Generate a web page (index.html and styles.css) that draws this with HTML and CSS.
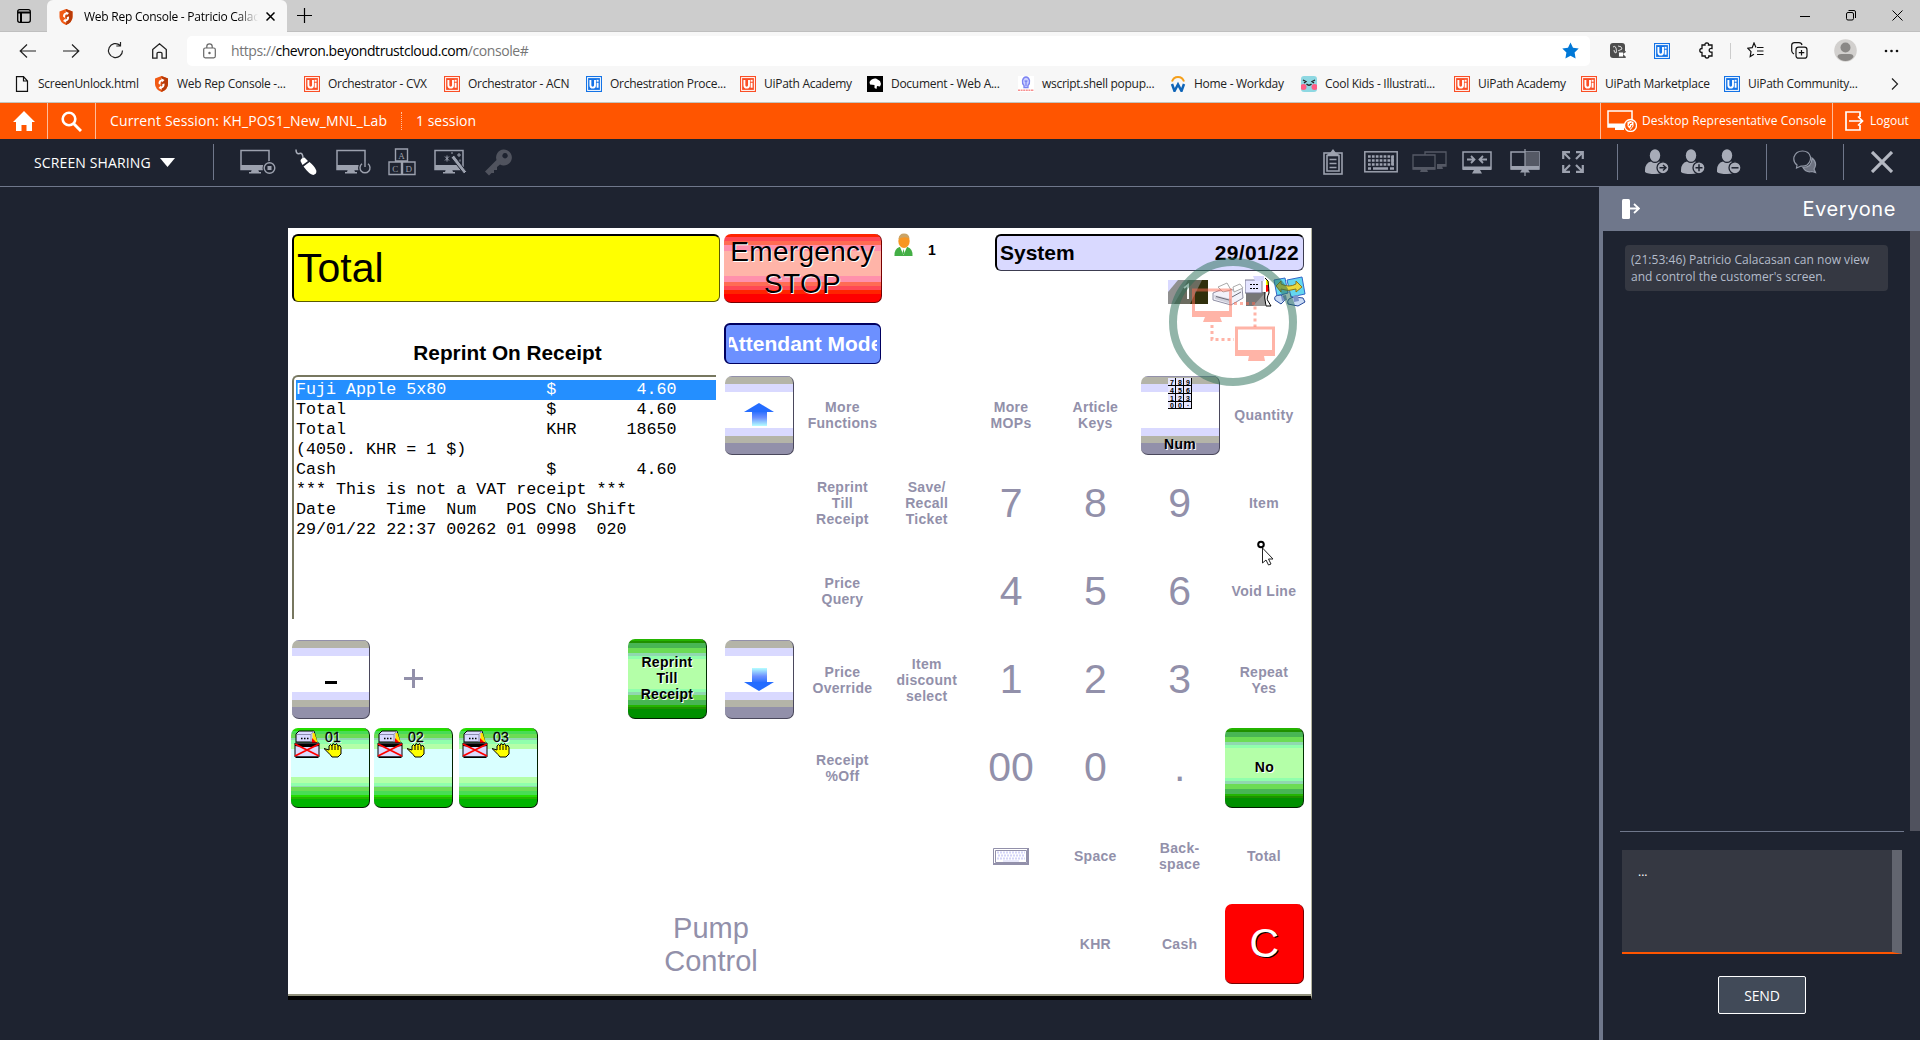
FILE: index.html
```html
<!DOCTYPE html>
<html lang="en">
<head>
<meta charset="utf-8">
<title>Web Rep Console</title>
<link rel="stylesheet" href="styles.css">
</head>
<body>
<svg class="defs" width="0" height="0">
  <symbol id="uipath" viewBox="0 0 16 16"><rect width="16" height="16" fill="currentColor"/><rect x="1.6" y="1.6" width="12.8" height="12.8" fill="none" stroke="#fff" stroke-width="1"/><path d="M4.4 4v5.2q0 2.4 2.3 2.4t2.3-2.4V4M11.6 6.8v5" fill="none" stroke="#fff" stroke-width="1.9"/><rect x="10.6" y="3.8" width="2" height="1.9" fill="#fff"/></symbol>
  <symbol id="shield" viewBox="0 0 14 16"><path d="M7 0 13.5 2.5V8Q13.500 13 7 16Q.5 13 .5 8V2.500z" fill="#f15a14"/><path d="M7 0 13.500 2.500V8Q13.500 13 7 16z" fill="#b93b08"/><path d="M4 7.500q0-3.500 3-4l-.5-1.200L10 4 7.700 6.500V5.200Q5.600 5.500 6 9zM10 7.500q.5 4-3 5l.4 1.300L4 12l2.600-2.700v1.500Q8.500 10 7.800 8z" fill="#fff"/></symbol>
  <symbol id="monitor" viewBox="0 0 36 26"><path d="M1 1.500h28v19H1z" fill="none" stroke="currentColor" stroke-width="1.500"/><path d="M1 16h28v4.500H1zM12 20h6l1 3h2v1.500H9V23h2z" fill="currentColor"/></symbol>
  <symbol id="person" viewBox="0 0 26 26"><ellipse cx="10" cy="6.500" rx="5.200" ry="6.300" fill="#a8acb8"/><path d="M0 21q0-7 6-8.500 4 3 8 0 6 1.500 6.500 8.500-3 4-10.500 4T0 23z" fill="#a8acb8"/><circle cx="18" cy="18.800" r="6" fill="#a8acb8" stroke="#1e2330" stroke-width="1.300"/></symbol>
  <symbol id="hand" viewBox="0 0 18 15"><path d="M0 5.500 5 7V3l1.500-1.500L8 3l1-2.500L11 2l1.500-1.500L14 3l2-.5 1 2v6.500l-3 3H8l-2-2.500z" fill="#ff0" stroke="#000"/><path d="M8 3v4M11 2.500V7M14 3v4" stroke="#000"/></symbol>
  <symbol id="pump-off" viewBox="0 0 26 28"><path d="M2 4 5 1h15l3 11H2z" fill="#dadaff" stroke="#000"/><path d="M3 4.500h14V12M17 4.500 20 1" fill="none" stroke="#8c8cb0"/><path d="M18.500 3h2l3 9h-5z" fill="#ffe000"/><path d="M18 8l5 5h-5z" fill="red"/><path d="M7 8.500h1.500M10 8.500h1.500M13 8.500h1.500" stroke="#000" stroke-width="1.300"/><path d="M1 13h24v14H1z" fill="#dadaff" stroke="#000"/><path d="M1 13.500h24v2.500l-7 1H8l-7-1z"/><path d="M1 14l24 12M25 14 1 26" stroke="red" stroke-width="1.900"/><path d="M2 27.300h22" stroke="#000" stroke-width="1.500"/></symbol>
</svg>

<header class="tabs">
  <div class="tab-menu"><svg width="16" height="16" viewBox="0 0 16 16" fill="none" stroke="#000" stroke-width="1.300"><rect x="1.700" y="1.700" width="12.600" height="12.600" rx="2"/><path d="M2 4.500h12M5 4.500V14" stroke-width="2"/></svg></div>
  <div class="tab"><svg width="14" height="16"><use href="#shield"/></svg><span>Web Rep Console - Patricio Calacasan</span><svg width="9" height="9" viewBox="0 0 9 9" stroke="#000" stroke-width="1.500"><path d="M.5.5l8 8M8.500.5l-8 8"/></svg></div>
  <svg class="new-tab" width="15" height="15" viewBox="0 0 15 15" stroke="#000" stroke-width="1.200"><path d="M7.500 0v15M0 7.500h15"/></svg>
  <div class="window-controls">
    <svg width="10" height="10" stroke="#000"><path d="M0 5.500h10"/></svg>
    <svg width="10" height="11" viewBox="0 0 10 11" fill="none" stroke="#000"><rect x=".5" y="2.500" width="7" height="7.500" rx="1.500"/><path d="M2.500.5H8q1.500 0 1.500 1.500v6"/></svg>
    <svg width="11" height="11" viewBox="0 0 11 11" stroke="#000"><path d="M.5.5l10 10M10.500.5l-10 10"/></svg>
  </div>
</header>

<nav class="address-row">
  <svg width="17" height="14" viewBox="0 0 17 14" fill="none" stroke="#222" stroke-width="1.200"><path d="M17 7H1.500M8 .5 1.200 7 8 13.500"/></svg>
  <svg width="17" height="14" viewBox="0 0 17 14" fill="none" stroke="#222" stroke-width="1.200"><path d="M0 7h15.500M9 .5 15.800 7 9 13.500"/></svg>
  <svg width="17" height="17" viewBox="0 0 17 17" fill="none" stroke="#222" stroke-width="1.200"><path d="M15.500 8.500A7 7 0 1 1 13 3.200M13.500 0v4H9.300"/></svg>
  <svg width="15" height="16" viewBox="0 0 15 16" fill="none" stroke="#222" stroke-width="1.300"><path d="M.7 6.500 7.500.8l6.800 5.700v8.700H10V10.500q0-1.200-1.200-1.200H6.200Q5 9.300 5 10.500v4.700H.7z"/></svg>
  <div class="url"><svg width="13" height="16" viewBox="0 0 13 16" fill="none" stroke="#666" stroke-width="1.200"><rect x=".7" y="5" width="11.600" height="9.800" rx="1.500"/><path d="M3.800 5V3.500a2.700 2.700 0 0 1 5.400 0V5"/><circle cx="6.500" cy="10" r=".6" fill="#666"/></svg><span><i>https://</i>chevron.beyondtrustcloud.com<i>/console#</i></span><svg class="fav" width="17" height="17" viewBox="0 0 17 17"><path d="M8.500.5 11 5.800l5.700.8-4.100 4 1 5.900-5.100-2.800-5.100 2.800 1-5.900-4.100-4L6 5.800z" fill="#0078d7"/></svg></div>
  <svg width="16" height="16" viewBox="0 0 16 16"><rect width="15" height="15" rx="3" fill="#4d4d4d"/><path d="M3 4q2-2 3 1t0 5q-2 0-2-3M8 3q4 0 4 3L8 8" fill="none" stroke="#ddd"/><rect x="8" y="8" width="8" height="7" rx="1" fill="#555"/><rect x="9" y="9.500" width="4" height="4" fill="#fff"/><path d="M13 11l3-2v5z" fill="#fff"/></svg>
  <svg class="blue" width="16" height="16"><use href="#uipath"/></svg>
  <svg width="16" height="17" viewBox="0 0 16 17" fill="none" stroke="#111" stroke-width="1.300"><path d="M3 3h3q-.3-2 1.800-2.200Q10 1 9.500 3H13v3.500q-2.800-.3-2.800 1.800T13 10.200V14H9.800q.3 2-1.800 2t-1.800-2H3v-3.500Q.8 10.500.8 8.500T3 6.500z"/></svg>
  <span class="rule"></span>
  <svg width="17" height="17" viewBox="0 0 17 17" fill="none" stroke="#111" stroke-width="1.200"><path d="M9 5.500 7 1 5.200 5.600.8 6.200l3.200 3.500L3.200 14.500 7 12.200M10 5.500h6.500M10 9h6.500M10 12.500h6.500"/></svg>
  <svg width="17" height="17" viewBox="0 0 17 17" fill="none" stroke="#111" stroke-width="1.200"><path d="M3 12Q1 11 .7 9V3Q1 .7 3.500.7H8q2.500 0 3 2.300"/><rect x="5" y="5.200" width="11" height="11" rx="2.500"/><path d="M10.500 8v5.500M7.800 10.700h5.500"/></svg>
  <svg width="23" height="23" viewBox="0 0 23 23"><circle cx="11.500" cy="11.500" r="11.300" fill="#d2d0ce"/><circle cx="11.500" cy="8.500" r="5" fill="#8a8886"/><path d="M3.500 18q0-3 4-3h8q4 0 4 3-3 4-8 4t-8-4z" fill="#8a8886"/></svg>
  <svg width="15" height="4" fill="#111"><circle cx="2" cy="2" r="1.300"/><circle cx="7.500" cy="2" r="1.300"/><circle cx="13" cy="2" r="1.300"/></svg>
</nav>

<nav class="bookmarks">
  <a><svg width="16" height="16" viewBox="0 0 16 16" fill="none" stroke="#111" stroke-width="1.200"><path d="M2.500.7h7L13.500 5v10.300h-11zM9.500.7V5h4"/></svg>ScreenUnlock.html</a>
  <a><svg width="15" height="16"><use href="#shield"/></svg>Web Rep Console -...</a>
  <a><svg class="orange" width="16" height="16"><use href="#uipath"/></svg>Orchestrator - CVX</a>
  <a><svg class="orange" width="16" height="16"><use href="#uipath"/></svg>Orchestrator - ACN</a>
  <a><svg class="blue" width="16" height="16"><use href="#uipath"/></svg>Orchestration Proce...</a>
  <a><svg class="orange" width="16" height="16"><use href="#uipath"/></svg>UiPath Academy</a>
  <a><svg width="16" height="16" viewBox="0 0 16 16"><rect width="16" height="16"/><path d="M4 4q2-2 5-1.500L13 5l1 3-1 2.500-3-.5-.5 3-2-1V9L3 8.500 2.500 6z" fill="#fff"/></svg>Document - Web A...</a>
  <a><svg width="16" height="16" viewBox="0 0 16 16"><rect width="16" height="16" fill="#fff"/><path d="M6 9.500Q4 7.500 4.500 4.500 5.500 1 8 1t3.500 3.500Q12 7.500 10 9.500v2H6z" fill="#cdd0ff" stroke="#7c83f2" stroke-width="1.300"/><path d="M8 5v5M6.500 5h3" stroke="#6670ee"/><path d="M0 14.300h16" stroke="#f79090" stroke-width="1.500" stroke-dasharray="2 .6"/></svg>wscript.shell popup...</a>
  <a><svg width="16" height="16" viewBox="0 0 16 16" fill="none"><path d="M2 5.500Q3.500 1 8 1t6 4.500" stroke="#f5a01c" stroke-width="2"/><path d="M2 8l2.500 7L8 8.500l3.500 6.500L14 8" stroke="#0f65b8" stroke-width="2.500"/></svg>Home - Workday</a>
  <a><svg width="16" height="16" viewBox="0 0 16 16"><rect width="16" height="16" rx="3" fill="#8ed8e2"/><circle cx="2.500" cy="11" r="3" fill="#ff5e86"/><circle cx="13.500" cy="11" r="3" fill="#ff5e86"/><path d="M2 4l3 1.500L3 7M14 4l-3 1.500L13 7M5.500 8q2.500 2.500 5 0" fill="none" stroke="#222" stroke-width="1.300"/></svg>Cool Kids - Illustrati...</a>
  <a><svg class="orange" width="16" height="16"><use href="#uipath"/></svg>UiPath Academy</a>
  <a><svg class="orange" width="16" height="16"><use href="#uipath"/></svg>UiPath Marketplace</a>
  <a><svg class="blue" width="16" height="16"><use href="#uipath"/></svg>UiPath Community...</a>
  <svg class="more" width="8" height="12" viewBox="0 0 8 12" fill="none" stroke="#222" stroke-width="1.200"><path d="M1 .5 6.500 6 1 11.500"/></svg>
</nav>

<div class="session-bar">
  <div class="sq"><svg width="22" height="20" viewBox="0 0 22 20" fill="#fff"><path d="M11 0 22 11h-3v9h-5.500v-6h-5v6H3v-9H0z"/></svg></div>
  <div class="sq"><svg width="21" height="21" viewBox="0 0 21 21" fill="none" stroke="#fff"><circle cx="8" cy="8" r="6.300" stroke-width="2.600"/><path d="M12.500 12.500l7.500 7.500" stroke-width="3"/></svg></div>
  <span class="session-name">Current Session: KH_POS1_New_MNL_Lab</span>
  <span class="session-count">1 session</span>
  <div class="rep"><svg width="30" height="22" viewBox="0 0 30 22"><path d="M1 1h24v16H1z" fill="none" stroke="#fff" stroke-width="1.500"/><path d="M1 13.500h24V17h-8v3h-9v-3H1z" fill="#fff"/><circle cx="23.500" cy="15.500" r="6" fill="#ff5500" stroke="#fff" stroke-width="1.300"/><path d="M20.500 12l3-1 3 1v4l-3 4-3-4z" fill="#fff"/><path d="M22 16q0-3 3-3M25 15q0 3-2.500 3.500" fill="none" stroke="#ff5500"/></svg>Desktop Representative Console</div>
  <div class="logout"><svg width="19" height="20" viewBox="0 0 19 20" fill="none" stroke="#fff" stroke-width="1.700"><path d="M15 6V1H1v18h14v-5M4 10h13M13 5.500l4.500 4.500L13 14.500"/></svg>Logout</div>
</div>

<div class="tools">
  <span class="mode">SCREEN SHARING</span>
  <svg width="15" height="9"><path d="M0 0h15L7.500 9z" fill="#fff"/></svg>
  <span class="vr"></span>
  <svg width="36" height="26" viewBox="0 0 36 26"><use href="#monitor" width="36" height="26"/><circle cx="29.500" cy="19" r="7" fill="#1e2330"/><circle cx="29.500" cy="19" r="5.300" fill="none" stroke="currentColor" stroke-width="1.400"/><rect x="27.500" y="17" width="4" height="4" fill="currentColor"/></svg>
  <svg width="24" height="26" viewBox="0 0 24 26"><path d="M1 .5q0 5 3.500 4t3.500 5" fill="none" stroke="#aaafbb" stroke-width="1.500"/><path d="M5.500 12q0-3 4-3.500l3.500 3.500-5.500 4zM8.500 17.500l6-4.500q5.500 4.500 6.800 8.500.7 3.500-3 4.500-4-.5-9.800-8.500z" fill="#fff"/></svg>
  <svg width="36" height="26" viewBox="0 0 36 26"><use href="#monitor" width="36" height="26"/><circle cx="29" cy="19" r="7" fill="#1e2330"/><path d="M26 14.800a5 5 0 1 0 6 0M29 12v6" fill="none" stroke="currentColor" stroke-width="1.400"/></svg>
  <svg width="28" height="28" viewBox="0 0 28 28" fill="none" stroke="currentColor" stroke-width="1.400"><path d="M7.500 1h12v12h-12zM1 14h12.500v12.500H1zM14.500 14H27v12.500H14.500z"/><g class="blk" fill="currentColor" stroke="none"><text x="13.500" y="10.500">A</text><text x="7.200" y="23.500">C</text><text x="20.800" y="23.500">D</text></g></svg>
  <svg width="34" height="27" viewBox="0 0 34 27"><use href="#monitor" width="36" height="26"/><path d="M17 8.500 20 6l12.500 16.500-2.500 2.500z" fill="currentColor" stroke="#1e2330"/><path d="M11 7.500l4 4M15 7.500l-4 4M13 6.500v6M25 4v4M23 6h4M18 3v2M26 10.500v2" stroke="currentColor"/></svg>
  <svg class="dim" width="27" height="27" viewBox="0 0 27 27" fill="#50535e"><path fill-rule="evenodd" d="M18.500.5a8 8 0 1 1-3.500 15L12 18v3H9v3H6.500L4 26.500 0 22.500 11.500 11A8 8 0 0 1 18.500.500zM20 4a2.700 2.700 0 1 0 .1 0z"/></svg>
  <svg width="20" height="26" viewBox="0 0 20 26" fill="none" stroke="currentColor" stroke-width="1.600"><rect x="1" y="4" width="18" height="21"/><path d="M4 6.500h12V22H4zM6.500 10.500h7M6.500 14.500h7M6.500 18.500h7"/><path d="M4 7q0-3 3-3l3-4 3 4q3 0 3 3z" fill="currentColor" stroke="none"/></svg>
  <svg width="34" height="22" viewBox="0 0 34 22" fill="none" stroke="currentColor"><rect x=".8" y=".8" width="32.400" height="20" stroke-width="1.500"/><path d="M4 5.500h26M4 9.500h26M4 13.500h26" stroke-width="2.700" stroke-dasharray="2.700 1.200"/><path d="M4 17.500h3M9 17.500h15M26 17.500h4M28.500 5v9" stroke-width="2.700"/></svg>
  <svg class="dim" width="35" height="22" viewBox="0 0 35 22" fill="none" stroke="#555965" stroke-width="1.300"><path d="M13 4V1h21v14h-9M1 4h22v14H1z"/><path d="M1 16h22v2.500h-8l1 2.500H8l1-2.500H1zM25 13h9v2h-4l1 3h-6z" fill="#555965" stroke="none"/></svg>
  <svg width="30" height="23" viewBox="0 0 30 23" fill="none" stroke="currentColor" stroke-width="1.500"><path d="M1 1h28v17H1z"/><path d="M1 15.500h28V19H18l2 3.500H10l2-3.500H1z" fill="currentColor" stroke="none"/><path d="M5 8.500h7M9 5l3.500 3.500L9 12M25 8.500h-7M21 5l-3.500 3.500L21 12" stroke-width="1.800"/></svg>
  <svg width="30" height="27" viewBox="0 0 30 27" fill="none" stroke="currentColor" stroke-width="1.500"><path d="M1 3h28v17H1z"/><path d="M15 3h14v14H15z" fill="#555965" stroke="none"/><path d="M1 17h28v3.500H18l2 3H10l2-3H1z" fill="currentColor" stroke="none"/><path d="M15 0v27" stroke-width="1.200"/></svg>
  <svg width="22" height="22" viewBox="0 0 22 22" fill="none" stroke="currentColor" stroke-width="2.200"><path d="M1.200 8V1.200H8M14 1.200h6.800V8M20.800 14v6.800H14M8 20.800H1.200V14M1.500 1.500l6.500 6.500M20.500 1.500l-6.500 6.500M20.500 20.500l-6.500-6.500M1.500 20.500l6.500-6.500"/></svg>
  <span class="vr"></span>
  <svg width="26" height="26" viewBox="0 0 26 26"><use href="#person"/><path d="M14.500 18.800h6M18 16l3 2.800-3 2.800" fill="none" stroke="#1e2330" stroke-width="1.400"/></svg>
  <svg width="26" height="26" viewBox="0 0 26 26"><use href="#person"/><path d="M14.500 18.800h7M18 15.300v7" stroke="#1e2330" stroke-width="1.500"/></svg>
  <svg width="26" height="26" viewBox="0 0 26 26"><use href="#person"/><path d="M14.500 18.800h7" stroke="#1e2330" stroke-width="1.500"/></svg>
  <span class="vr"></span>
  <svg width="24" height="24" viewBox="0 0 24 24" fill="none" stroke="#9298a6" stroke-width="1.200"><path d="M4 15q-4-3-3-8 2-6 8.500-6t8 6q.5 5-3.500 8-3 1.500-6 1L3.500 18z"/><path d="M19 8q5 4 3 9l-1 2 1.500 3.500L19 21.500q-6 1.500-9-4 9 0 9-9.500z" fill="#6d7280"/></svg>
  <span class="vr"></span>
  <svg width="22" height="22" viewBox="0 0 22 22" stroke="#b4b8c2" stroke-width="3.200"><path d="M1 1l20 20M21 1 1 21"/></svg>
</div>

<main class="workspace">
  <section class="stage">
    <div class="pos">
      <div class="left">
        <div class="total">Total</div>
        <div class="list-title">Reprint On Receipt</div>
        <div class="receipt"><pre class="sel">Fuji Apple 5x80          $        4.60</pre><pre>Total                    $        4.60
Total                    KHR     18650
(4050. KHR = 1 $)
Cash                     $        4.60
*** This is not a VAT receipt ***
Date     Time  Num   POS CNo Shift
29/01/22 22:37 00262 01 0998  020</pre></div>
        <div class="left-keys">
          <div class="btn grey minus"><svg width="12" height="3"><path d="M0 0h12v3H0z"/></svg></div>
          <div class="plus"><svg width="19" height="19" stroke="#9290aa" stroke-width="3"><path d="M9.500 0v19M0 9.500h19"/></svg></div>
          <i></i><i></i>
          <div class="btn green">Reprint<br>Till<br>Receipt</div>
          <div class="btn pump"><svg width="26" height="28"><use href="#pump-off"/></svg><div>01<svg width="18" height="15"><use href="#hand"/></svg></div></div>
          <div class="btn pump"><svg width="26" height="28"><use href="#pump-off"/></svg><div>02<svg width="18" height="15"><use href="#hand"/></svg></div></div>
          <div class="btn pump"><svg width="26" height="28"><use href="#pump-off"/></svg><div>03<svg width="18" height="15"><use href="#hand"/></svg></div></div>
        </div>
        <div class="pump-control">Pump<br>Control</div>
      </div>
      <div class="right">
        <div class="top">
          <div class="modes"><div class="stop">Emergency<br>STOP</div><div class="attendant"><span>Attendant Mode</span></div></div>
          <svg class="operator" width="19" height="24" viewBox="0 0 19 24"><path d="M.5 23q-.5-7 5-9h8q5.500 2 5 9z" fill="#43ae45"/><path d="M6 14h7l-3.500 8z" fill="#fff"/><path d="M9.500 16l1 4-1 1.500-1-1.500z" fill="#43ae45"/><ellipse cx="10" cy="8" rx="5.700" ry="7" fill="#f89622"/><path d="M4.500 6Q5 .5 10 .5t5.500 5Q10 3 4.500 6z" fill="#caa467"/></svg>
          <b class="op-no">1</b>
          <div class="status">
            <div class="system"><b>System</b><b class="date">29/01/22</b></div>
            <div class="devices">
              <svg width="40" height="24" viewBox="0 0 40 24"><path d="M0 0h40v24H0z" fill="#909090"/><path d="M0 0h10L0 12z" fill="#d9d9ff"/><path d="M20 0h20v24H6z" fill="#6c6c60"/><path d="M34 0h6v24H22z" fill="#30300c"/><path d="M16 8l4-3v14" fill="none" stroke="#fff" stroke-width="2"/></svg>
              <svg width="32" height="24" viewBox="0 0 32 24"><path d="M1 11l12-5 8 2 9-3 1 11-12 7L1 18z" fill="#f2f2fa" stroke="#9090a4"/><path d="M6 5l9-4 4 7-8 2zM21 5l7-3 3 4-9 4z" fill="#fff" stroke="#aaa"/><path d="M2 13l17 4v5L3 17z" fill="#cfcfda"/><path d="M4 14.500l13 3.500M20 15l9-5" stroke="#6c6c78"/></svg>
              <svg width="27" height="31" viewBox="0 0 27 31"><path d="M1 16h19v14H1z" fill="#777"/><path d="M8 30 20 17v13z" fill="#9a9a9a"/><path d="M0 4h17v13H0z" fill="#e4e4ff" stroke="#77778f"/><path d="M5 8.500h9M5 12.500h9" stroke="#000" stroke-dasharray="2 1"/><path d="M8 0h11v5h-9z" fill="#d9d9ff"/><path d="M21 3l3 3v10l-3-3z" fill="#ff0"/><path d="M21 9h3v6l-3 1z" fill="red"/><path d="M20 2l3 3q1 9 1 12-3 6-1 8l3 5h-5q-2-9-1-14" fill="none" stroke="#000"/></svg>
              <svg width="33" height="31" viewBox="0 0 33 31"><path d="M1 4l11-2 3 15-11 3zM14 4l15-3 3 17-14 3z" fill="#64d6ef" stroke="#3267c9"/><path d="M2 24q-2-5 6-5l5 4-5 5zM15 28q-2-6 7-7l8 1 2 4-7 4z" fill="#c9daf4" stroke="#24489b"/><path d="M8 20l5-1 1 5-5 1zM20 20l5-1 1 6-5 1z" fill="#7c93c8"/><path d="M3 10l5-5v3q8 4 15 0V5l6 6-6 5v-3q-8 3-15 0v3z" fill="#e9d83c" stroke="#887720"/></svg>
            </div>
          </div>
        </div>
        <div class="keys">
          <div class="btn grey narrow"><svg width="30" height="23" viewBox="0 0 30 23"><defs><linearGradient id="fade" x2="0" y2="1"><stop stop-color="#246cff"/><stop offset=".45" stop-color="#6c90ff"/><stop offset="1" stop-color="#b4ffff"/></linearGradient></defs><path d="M8 8h15v15H8z" fill="url(#fade)"/><path d="M0 9 15 0l15 9z" fill="#246cff"/></svg></div>
          <span>More<br>Functions</span><i></i><span>More<br>MOPs</span><span>Article<br>Keys</span>
          <div class="btn grey num"><svg width="24" height="31" viewBox="0 0 24 31"><path d="M0 0h24v31H0z" fill="#e6e6ff"/><path d="M7.500 0v31M15.500 0v31M0 7.500h24M0 15.500h24M0 23.500h24M23.500 0v31M0 30.500h24" stroke="#000"/><g class="pad"><text x="4" y="6.500">7</text><text x="12" y="6.500">8</text><text x="20" y="6.500">9</text><text x="4" y="14.500">4</text><text x="12" y="14.500">5</text><text x="20" y="14.500">6</text><text x="4" y="22.500">1</text><text x="12" y="22.500">2</text><text x="20" y="22.500">3</text><text x="4" y="29.800">0</text><text x="12" y="29.800">0</text><text x="20" y="28">.</text></g></svg>Num</div>
          <span>Quantity</span>
          <i></i><span>Reprint<br>Till<br>Receipt</span><span>Save/<br>Recall<br>Ticket</span><em>7</em><em>8</em><em>9</em><span>Item</span>
          <i></i><span>Price<br>Query</span><i></i><em>4</em><em>5</em><em>6</em><span>Void Line</span>
          <div class="btn grey narrow"><svg width="30" height="23" viewBox="0 0 30 23"><g transform="translate(0 23) scale(1 -1)"><path d="M8 8h15v15H8z" fill="url(#fade)"/><path d="M0 9 15 0l15 9z" fill="#246cff"/></g></svg></div>
          <span>Price<br>Override</span><span>Item<br>discount<br>select</span><em>1</em><em>2</em><em>3</em><span>Repeat<br>Yes</span>
          <i></i><span>Receipt<br>%Off</span><i></i><em>00</em><em>0</em><em>.</em><div class="btn green">No</div>
          <i></i><i></i><i></i>
          <span><svg width="36" height="17" viewBox="0 0 36 17"><path d="M.5.5h35v16H.5z" fill="#fff" stroke="#9290aa"/><path d="M2.500 2.500h31v12h-31z" fill="none" stroke="#9290aa"/><path d="M0 16h36M35 0v17" stroke="#9290aa" stroke-width="2"/><path d="M4 4.500h28M5 7.500h26M4 10.500h28" stroke="#d4d4f8" stroke-width="2" stroke-dasharray="2 1"/><path d="M10 13h16" stroke="#d4d4f8"/></svg></span>
          <span>Space</span><span>Back-<br>space</span><span>Total</span>
          <i></i><i></i><i></i><i></i><span>KHR</span><span>Cash</span><div class="btn clear">C</div>
        </div>
      </div>
      <svg class="link-badge" width="128" height="128" viewBox="0 0 128 128"><circle cx="64" cy="64" r="60" fill="none" stroke="#266b54" stroke-opacity=".5" stroke-width="8"/><g fill="none" stroke="#ff6a50" stroke-opacity=".5"><path d="M24.500 53V32h37v21" stroke-width="3"/><path d="M67.500 92V70h37v22" stroke-width="3"/><path d="M43 67v14.500h22M65 45.500h21V69" stroke-width="3" stroke-dasharray="3 3"/></g><path d="M23 53h40v6H51l2 5H34l2-5H23zM66 92h40v6H95l1 5H79l1-5H66z" fill="#ff6a50" fill-opacity=".5"/></svg>
      <svg class="pointer" width="17" height="26" viewBox="0 0 17 26"><circle cx="4" cy="4.500" r="2.800" fill="#fff" stroke="#000" stroke-width="2"/><path d="M5.500 8v15l3.500-3 2.500 5 2.500-1-2.500-5H16z" fill="#fff" stroke="#222"/></svg>
    </div>
  </section>
  <aside class="chat">
    <div class="chat-head"><svg width="18" height="20" viewBox="0 0 18 20"><rect width="8" height="20" rx="1.500" fill="#fff"/><path d="M8 9.500h9M12 5l5 4.500-5 4.500" fill="none" stroke="#fff" stroke-width="1.800"/></svg><span>Everyone</span></div>
    <div class="log"><p>(21:53:46) Patricio Calacasan can now view and control the customer's screen.</p></div>
    <div class="compose"><div class="box">...</div><button>SEND</button></div>
  </aside>
</main>
</body>
</html>
```
FILE: styles.css
```css
* { box-sizing: border-box; }
body { margin: 0; width: 1920px; height: 1040px; overflow: hidden; background: #1e2330; font-family: "Open Sans", "Noto Sans", sans-serif; font-size: 12px; }
svg { display: block; flex: none; }
.defs { position: absolute; }
.blue { color: #1473e6; }
.orange { color: #fa4f26; }

/* browser chrome */
.tabs { display: flex; height: 32px; background: #cdcdcd; align-items: center; border-bottom: 1px solid #bfbfbf; }
.tab-menu { width: 47px; padding-left: 16px; }
.tab { width: 240px; height: 33px; display: flex; align-items: center; padding-left: 12px; background: #f7f7f7; border-radius: 6px 6px 0 0; align-self: flex-start; z-index: 1; }
.tab span { width: 174px; margin: 0 8px 0 11px; overflow: hidden; white-space: nowrap; letter-spacing: -.25px; -webkit-mask-image: linear-gradient(90deg, #000 88%, transparent); mask-image: linear-gradient(90deg, #000 88%, transparent); }
.new-tab { margin-left: 10px; }
.window-controls { margin-left: auto; margin-right: 17px; display: flex; gap: 36px; align-items: center; }
.address-row { height: 38px; background: #f7f7f7; display: grid; grid-template-columns: 44px 44px 45px 35px 1423px 44px 45px 31px 17px 44px 43px 50px 1fr; padding: 0 0 1px 19px; align-items: center; }
.url { width: 1403px; height: 30px; background: #fff; border-radius: 5px; display: flex; align-items: center; padding: 0 11px 0 16px; font-size: 14px; letter-spacing: -.42px; }
.url span { margin-left: 15px; flex: 1; }
.url i { font-style: normal; color: #767676; }
.rule { width: 1px; height: 16px; background: #ccc; }
.bookmarks { height: 33px; background: #f7f7f7; border-bottom: 1px solid #c4c4bc; display: grid; grid-template-columns: 140px 150px 140px 142px 154px 127px 151px 152px 131px 153px 127px 143px 167px 1fr; padding: 0 0 5px 14px; align-items: center; white-space: nowrap; letter-spacing: -.28px; color: #222; }
.bookmarks a { display: flex; align-items: center; gap: 8px; }

/* session bar */
.session-bar { height: 36px; background: #ff5500; color: #fff; display: flex; align-items: stretch; line-height: 36px; font-size: 14px; }
.sq { width: 48px; border-right: 1px solid #ffbb99; display: flex; align-items: center; justify-content: center; }
.session-name { width: 305px; padding-left: 14px; letter-spacing: .13px; white-space: nowrap; }
.session-count { padding-left: 14px; height: 18px; line-height: 18px; align-self: center; border-left: 1px dotted #ffc0a0; }
.rep { margin-left: auto; width: 232px; border-left: 1px solid #ffbb99; display: flex; align-items: center; gap: 5px; padding-left: 6px; font-size: 12px; letter-spacing: .1px; white-space: nowrap; }
.logout { width: 88px; border-left: 1px solid #ffbb99; display: flex; align-items: center; gap: 6px; padding-left: 12px; font-size: 12px; }

/* tool strip */
.tools { height: 48px; border-bottom: 1px solid #6f778b; color: #9ca1ae; display: grid; align-items: center; padding: 0 0 1px 34px; grid-template-columns: 126px 53px 27px 55px 41px 52px 46px 51px 838px 41px 48px 50px 48px 52px 55px 28px 36px 36px 49px 27px 50px 28px 1fr; }
.mode { color: #fff; font-size: 14px; letter-spacing: .12px; white-space: nowrap; }
.vr { width: 1px; height: 36px; background: #6f778b; }
.blk text { font: 9px "Liberation Serif", serif; text-anchor: middle; }

.workspace { display: flex; height: 853px; }
.stage { width: 1599px; padding: 41px 0 0 288px; }
.pos { position: relative; width: 1024px; height: 772px; display: flex; background: #fff; border-right: 1px solid #b4b4a0; border-bottom: 4px solid #000; box-shadow: inset 0 -2px #90907c; font-family: "Liberation Sans", Arial, sans-serif; color: #000; }
.left { width: 428px; padding: 6px 0 0 4px; }
.total { width: 428px; height: 68px; background: #ff0; border: 1px solid #5a5a00; border-top: 2px solid #000; border-left: 2px solid #000; border-radius: 6px; font-size: 41px; line-height: 65px; padding-left: 3px; }
.list-title { margin: 38px 0 9px; text-align: center; padding-left: 7px; font-weight: bold; font-size: 20.800px; line-height: 26px; }
.receipt { width: 424px; height: 244px; border-left: 2px solid #77775f; border-top: 2px solid #77775f; border-top-left-radius: 6px; padding: 3px 0 0 2px; }
.receipt pre { margin: 0; font: 16.700px/20px "Liberation Mono", "Courier New", monospace; }
.receipt .sel { background: #248fff; color: #fff; width: 420px; }
.left-keys { display: grid; grid-template-columns: 83px 84px 84px 83px 79px; grid-template-rows: 80px 80px; row-gap: 9px; margin: 20px 0 0 -1px; }
.btn { width: 79px; height: 80px; border-radius: 7px; display: flex; flex-direction: column; align-items: center; justify-content: center; text-align: center; font-weight: bold; font-size: 14px; line-height: 16px; letter-spacing: .3px; color: #000; }
.grey { height: 79px; border-right: 1px solid #4a485c; border-bottom: 1px solid #4a485c; background: linear-gradient(#9290aa 1px, #b4b4a8 1px 8px, #d9d9ff 8px 16px, #fff 16px 52px, #d9d9ff 52px 60px, #b4b4a8 60px 67px, #9290aa 67px); }
.minus { margin: 1px 0 0 1px; width: 78px; padding-top: 6px; }
.plus { padding: 30px 0 0 30px; }
.left-keys .green { margin-left: 3px; padding-bottom: 2px; }
.narrow { width: 69px; }
.num { justify-content: flex-start; padding-top: 2px; }
.num svg { margin-bottom: 27px; }
.pad text { font: bold 7px "Liberation Sans", sans-serif; text-anchor: middle; letter-spacing: 0; text-shadow: none; }
.green, .num { text-shadow: 1px 1px #fff; }
.green { border-right: 1px solid #003000; border-bottom: 1px solid #002000; background: linear-gradient(#24b400 2px, #1f9000 2px 4px, #48b555 4px 9px, #6cdc54 9px 14px, #90d8b0 14px 17px, #90ffac 17px 20px, #b4ffa8 20px 50px, #90ffac 50px 53px, #90d8b0 53px 56px, #6cdc54 56px 61px, #48b555 61px 66px, #24b400 66px 68px, #1f9000 68px 70px, #009000 70px); }
.pump { flex-direction: row; align-items: flex-start; justify-content: flex-start; padding: 2px 0 0 3px; border-right: 1px solid #002000; border-bottom: 1px solid #002000; background: linear-gradient(#24dc00 3px, #48dc55 3px 6px, #6cdc54 6px 10px, #90d8b0 10px 12px, #90ffac 12px 16px, #b4ffa8 16px 21px, #d9ffff 21px 49px, #b4ffa8 49px 55px, #90ffac 55px 58px, #90d8b0 58px 59px, #6cdc54 59px 63px, #48dc55 63px 67px, #24dc00 67px 69px, #24b400 69px 71px, #00b400 71px); }
.pump:last-child { margin-left: 1px; }
.pump div { margin-left: 4px; font-weight: normal; line-height: 13px; padding-top: 1px; -webkit-text-stroke: .3px #000; text-shadow: 1px 1px #fff; }
.pump div svg { margin-top: -1px; }
.pump-control { width: 838px; margin-top: 104px; text-align: center; font-size: 29px; line-height: 33px; color: #9290aa; }
.right { width: 590px; padding: 6px 0 0 8px; }
.top { display: flex; height: 137px; }
.modes { width: 158px; }
.stop { height: 69px; border-radius: 7px; border-right: 1px solid #700; border-bottom: 1px solid #700; text-align: center; font-size: 28px; line-height: 32px; padding-top: 2px; letter-spacing: .3px; white-space: nowrap; text-shadow: 1px 1px #fff; background: linear-gradient(#ff2400 3px, #ff4855 3px 7px, #ff6c54 7px 11px, #ff90ac 11px 17px, #ffb4a8 17px 42px, #ff90ac 42px 48px, #ff6c54 48px 52px, #ff4855 52px 56px, #ff2400 56px 60px, #f00 60px); }
.attendant { width: 157px; height: 41px; margin-top: 20px; padding: 0 3px; background: #6c90ff; border: 1px solid #000060; border-top-width: 2px; border-left-width: 2px; border-radius: 6px; }
.attendant span { display: flex; justify-content: center; overflow: hidden; white-space: nowrap; color: #fff; font-weight: bold; font-size: 21px; line-height: 38px; }
.operator { margin-left: 12px; margin-top: -1px; }
.op-no { width: 83px; padding: 8px 0 0 15px; font-size: 14px; }
.status { width: 309px; margin-left: -1px; }
.system { height: 37px; background: #d9d9ff; border: 1px solid #3c3c50; border-top: 2px solid #000; border-left: 2px solid #000; border-radius: 6px; display: flex; justify-content: space-between; padding: 0 4px 0 3px; font-size: 21px; line-height: 34px; }
.date { letter-spacing: .3px; }
.devices { display: flex; align-items: center; margin: 5px 0 0 173px; gap: 1px; }
.devices svg:nth-child(2) { margin-left: 3px; margin-top: 4px; }
.keys { display: grid; grid-template-columns: repeat(7, 84.300px); grid-auto-rows: 88.200px; margin-left: -8px; justify-items: center; align-items: center; text-align: center; font-weight: bold; font-size: 14px; line-height: 16px; letter-spacing: .3px; color: #9290aa; }
.keys .btn { margin-left: 2px; }
.keys em { font: 41px/1 "Liberation Sans", Arial, sans-serif; letter-spacing: 0; }
.clear { background: #f00; color: #fff; font: 41px/1 "Liberation Sans", Arial, sans-serif; text-shadow: 1px 1px #000; border-right: 1px solid #700; border-bottom: 1px solid #700; }
.link-badge { position: absolute; left: 881px; top: 30px; }
.pointer { position: absolute; left: 969px; top: 312px; }

/* chat */
.chat { width: 321px; border-left: 4px solid #6f778b; display: flex; flex-direction: column; }
.chat-head { height: 44px; background: #6f778b; color: #fff; display: flex; align-items: center; justify-content: space-between; padding: 0 24px 0 19px; font: 20px Inter, sans-serif; letter-spacing: .6px; }
.log { height: 600px; border-right: 10px solid #50525e; padding: 14px 22px 0; }
.log p { margin: 0; width: 263px; height: 46px; padding: 6px 6px; background: #353842; border-radius: 4px; color: #b4bccb; line-height: 17px; font-size: 12px; letter-spacing: .03px; }
.compose { margin: 0 16px 0 17px; border-top: 1px solid #6f778b; padding-top: 18px; display: flex; flex-direction: column; align-items: center; }
.box { width: 280px; height: 104px; background: #353842; border-right: 10px solid #62656f; border-bottom: 2px solid #ff5500; color: #fff; padding: 13px 16px; }
.compose button { width: 88px; height: 38px; margin-top: 22px; background: #414a58; border: 1px solid #fff; border-radius: 2px; color: #fff; font: 14px "Open Sans", sans-serif; letter-spacing: -.2px; padding: 0; }
```
